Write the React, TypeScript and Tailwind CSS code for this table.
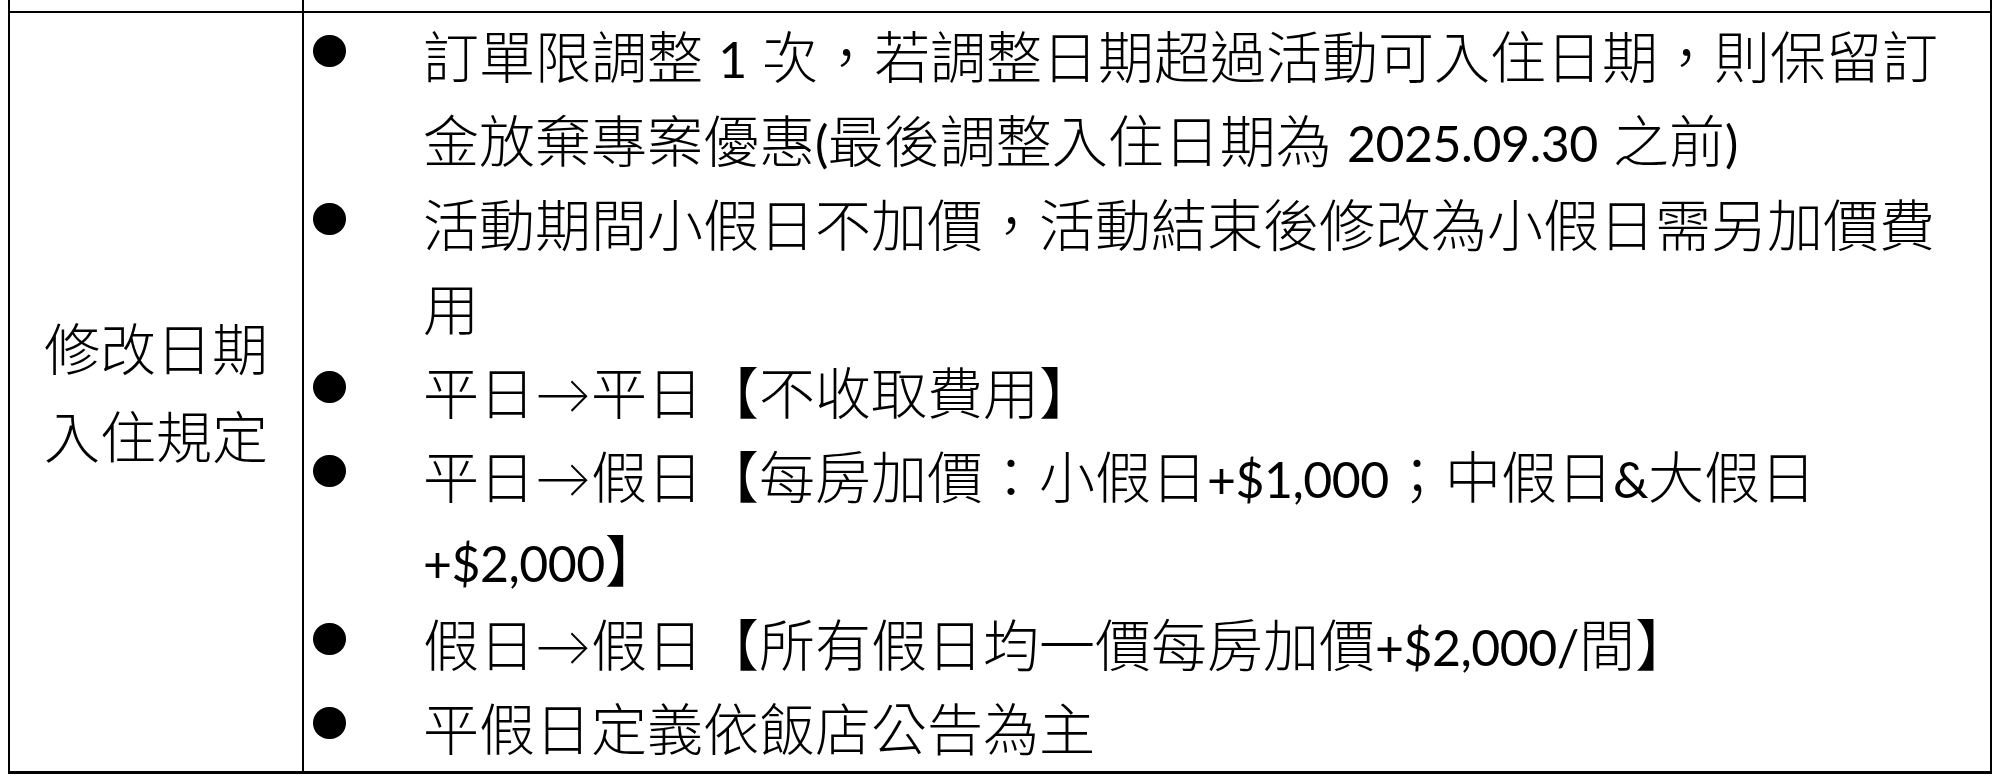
import React from "react";

const FONT = {
  fontFamily:
    '"Lato", "Noto Sans CJK TC", "Noto Sans CJK SC", sans-serif',
};

function Bullet({ children }: { children: React.ReactNode }) {
  return (
    <div className="flex">
      <div className="w-[119px] shrink-0 pl-[9px] pt-[20px]">
        <div className="w-[33px] h-[32px] rounded-full bg-black" />
      </div>
      <div className="flex flex-col">{children}</div>
    </div>
  );
}

function Line({ children }: { children: React.ReactNode }) {
  return <div className="whitespace-nowrap h-[84px] leading-[84px]">{children}</div>;
}

function L({ children }: { children: React.ReactNode }) {
  return <span className="font-normal text-[50px] tracking-[-0.5px]">{children}</span>;
}

export default function App() {
  return (
    <div className="w-[2000px] h-[779px] bg-white text-black" style={FONT}>
      <div className="ml-[8px] w-[1984px] border-l-2 border-r-2 border-black">
        <div className="flex h-[11px]">
          <div className="w-[294px] border-r-2 border-black" />
          <div className="flex-1" />
        </div>
        <div className="flex border-t-2 border-b-[3px] border-black">
          <div className="w-[294px] shrink-0 border-r-2 border-black flex flex-col items-center justify-center text-[56px] font-light leading-[88px] pt-[2px]">
            <div>修改日期</div>
            <div>入住規定</div>
          </div>
          <div className="flex-1 pt-[2px] text-[56px] font-light">
            <Bullet>
              <Line>
                訂單限調整 <L>1</L> 次，若調整日期超過活動可入住日期，則保留訂
              </Line>
              <Line>
                金放棄專案優惠<L>(</L>最後調整入住日期為 <L>2025.09.30</L> 之前<L>)</L>
              </Line>
            </Bullet>
            <Bullet>
              <Line>活動期間小假日不加價，活動結束後修改為小假日需另加價費</Line>
              <Line>用</Line>
            </Bullet>
            <Bullet>
              <Line>平日→平日【不收取費用】</Line>
            </Bullet>
            <Bullet>
              <Line>
                平日→假日【每房加價：小假日<L>+$1,000</L>；中假日<L>&amp;</L>大假日
              </Line>
              <Line>
                <L>+$2,000</L>】
              </Line>
            </Bullet>
            <Bullet>
              <Line>
                假日→假日【所有假日均一價每房加價<L>+$2,000/</L>間】
              </Line>
            </Bullet>
            <Bullet>
              <Line>平假日定義依飯店公告為主</Line>
            </Bullet>
          </div>
        </div>
      </div>
    </div>
  );
}
